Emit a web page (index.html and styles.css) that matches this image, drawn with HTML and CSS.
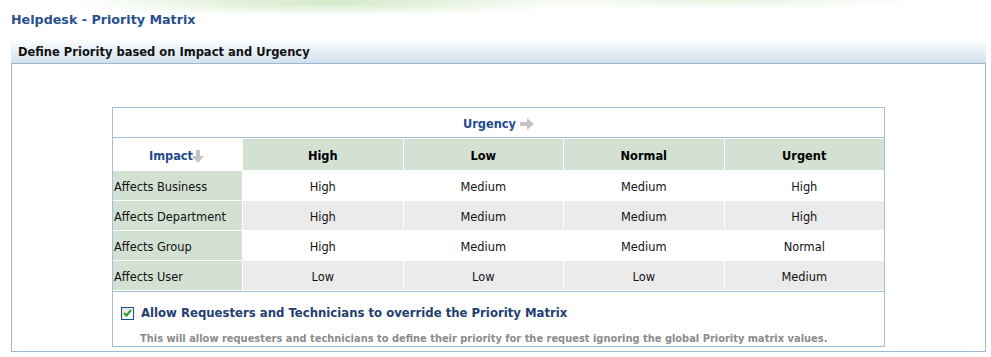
FILE: index.html
```html
<!DOCTYPE html>
<html>
<head>
<meta charset="utf-8">
<link rel="stylesheet" href="styles.css">
</head>
<body>
<div class="page">
  <h1 class="title">Helpdesk - Priority Matrix</h1>
  <div class="panel">
    <div class="panel-head">Define Priority based on Impact and Urgency</div>
    <div class="panel-body">
      <div class="matrix">
        <div class="urgency">Urgency
          <svg class="arrow" width="14" height="12" viewBox="0 0 14 12"><path d="M0 4h7V0l7 6-7 6V8H0z" fill="#c4c4c4"/></svg>
        </div>
        <div class="grid">
          <div class="impact">Impact<svg class="arrow-down" width="12" height="13" viewBox="0 0 12 13"><path d="M4 0h4v6h4l-6 7-6-7h4z" fill="#c4c4c4"/></svg></div>
          <div class="colh">High</div>
          <div class="colh">Low</div>
          <div class="colh">Normal</div>
          <div class="colh">Urgent</div>

          <div class="rowh">Affects Business</div>
          <div class="cell">High</div>
          <div class="cell">Medium</div>
          <div class="cell">Medium</div>
          <div class="cell">High</div>

          <div class="rowh">Affects Department</div>
          <div class="cell alt">High</div>
          <div class="cell alt">Medium</div>
          <div class="cell alt">Medium</div>
          <div class="cell alt">High</div>

          <div class="rowh">Affects Group</div>
          <div class="cell">High</div>
          <div class="cell">Medium</div>
          <div class="cell">Medium</div>
          <div class="cell">Normal</div>

          <div class="rowh">Affects User</div>
          <div class="cell alt">Low</div>
          <div class="cell alt">Low</div>
          <div class="cell alt">Low</div>
          <div class="cell alt">Medium</div>
        </div>
        <div class="override">
          <label class="check-row">
            <span class="checkbox"><svg width="9" height="8" viewBox="0 0 9 8"><path d="M1 4l2.5 2.5L8 1" fill="none" stroke="#2f9a2f" stroke-width="2"/></svg></span>
            <span class="check-label">Allow Requesters and Technicians to override the Priority Matrix</span>
          </label>
          <p class="note">This will allow requesters and technicians to define their priority for the request ignoring the global Priority matrix values.</p>
        </div>
      </div>
    </div>
  </div>
</div>
</body>
</html>
```

FILE: styles.css
```css
html, body {
  margin: 0;
  padding: 0;
  background: #fff;
}
body {
  font-family: "DejaVu Sans", Verdana, sans-serif;
  width: 991px;
  height: 357px;
  overflow: hidden;
  background:
    radial-gradient(ellipse 260px 14px at 330px 2px, rgba(196, 226, 180, 0.75), rgba(255,255,255,0) 100%),
    radial-gradient(ellipse 200px 10px at 720px 0px, rgba(214, 234, 204, 0.6), rgba(255,255,255,0) 100%),
    #fff;
}
.page {
  padding: 0 5px 0 11px;
}
.title {
  margin: 0;
  height: 40px;
  padding-top: 11px;
  box-sizing: border-box;
  font-size: 12.7px;
  font-weight: bold;
  color: #28508f;
  line-height: 17px;
}
.panel {
  width: 975px;
}
.panel-head {
  height: 24px;
  box-sizing: border-box;
  padding: 5px 0 0 7px;
  font-size: 11.5px;
  font-weight: bold;
  color: #111;
  line-height: 14px;
  background: linear-gradient(to bottom, #ffffff 0%, #eef3f9 35%, #d3e1ee 100%);
  border-bottom: 1px solid #9eb8d3;
}
.panel-body {
  border: 1px solid #9eb8d3;
  border-top: none;
  padding: 43px 100px 4px;
}
.matrix {
  border: 1px solid #a6bfd8;
}
.urgency {
  height: 30px;
  border-bottom: 1px solid #a6bfd8;
  display: flex;
  align-items: center;
  justify-content: center;
  gap: 4px;
  padding-top: 2px;
  box-sizing: border-box;
  font-size: 11.4px;
  font-weight: bold;
  color: #1f4b8e;
}
.arrow { margin-top: 1px; }
.grid {
  display: grid;
  grid-template-columns: 129px repeat(4, 1fr);
  grid-template-rows: 31px repeat(4, 29px);
  gap: 1px;
  padding: 1px 0;
  background: #fff;
  font-size: 11.4px;
}
.grid > div {
  padding-top: 2px;
  box-sizing: border-box;
}
.impact {
  display: flex;
  align-items: center;
  justify-content: center;
  font-weight: bold;
  color: #1f4b8e;
  padding-right: 2px;
}
.arrow-down { margin-left: -1px; margin-top: 1px; }
.colh {
  background: #d3e1d3;
  display: flex;
  align-items: center;
  justify-content: center;
  font-weight: bold;
  color: #000;
}
.rowh {
  background: #d3e1d3;
  display: flex;
  align-items: center;
  padding-left: 1px;
  color: #111;
}
.cell {
  display: flex;
  align-items: center;
  justify-content: center;
  background: #fff;
  color: #111;
}
.cell.alt {
  background: #ebebeb;
}
.override {
  border-top: 1px solid #a6bfd8;
  padding: 14px 0 0 8px;
  height: 55px;
  box-sizing: border-box;
}
.check-row {
  display: flex;
  align-items: center;
  gap: 7px;
}
.checkbox {
  width: 11px;
  height: 11px;
  border: 1px solid #1c5180;
  background: linear-gradient(135deg, #e4e4df, #ffffff);
  display: flex;
  align-items: center;
  justify-content: center;
}
.check-label {
  font-size: 11.7px;
  font-weight: bold;
  color: #23406f;
  line-height: 14px;
}
.note {
  margin: 13px 0 0 19px;
  font-size: 9.9px;
  font-weight: bold;
  color: #8c8c8c;
  line-height: 12px;
}
```
